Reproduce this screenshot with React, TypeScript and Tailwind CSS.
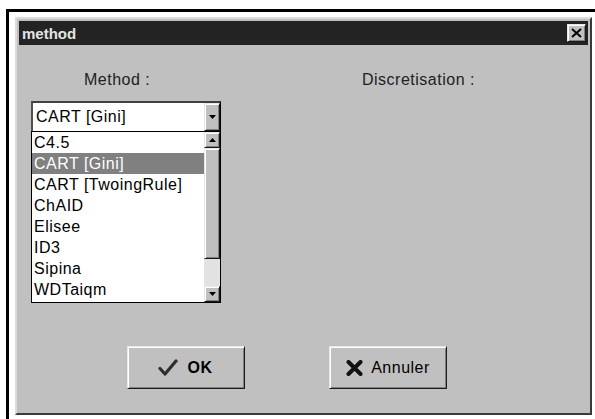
import React from 'react';

const METHODS = ['C4.5', 'CART [Gini]', 'CART [TwoingRule]', 'ChAID', 'Elisee', 'ID3', 'Sipina', 'WDTaiqm'];

// small arrow glyph used by the combo and scrollbar buttons
const Arrow = ({ up = false }: { up?: boolean }) => (
  <svg width="7" height="4" viewBox="0 0 7 4" className="block">
    {up ? <polygon points="0,4 7,4 3.5,0" fill="#000" /> : <polygon points="0,0 7,0 3.5,4" fill="#000" />}
  </svg>
);

const CheckIcon = () => (
  <svg width="20" height="17" viewBox="0 0 20 17" className="block">
    <path d="M2 9.5 L7 15 L18 2" fill="none" stroke="#2e2e2e" strokeWidth="3.2" strokeLinecap="round" strokeLinejoin="round" />
  </svg>
);

const CrossIcon = () => (
  <svg width="17" height="16" viewBox="0 0 17 16" className="block">
    <path d="M2.5 2 L14.5 14 M14.5 2 L2.5 14" fill="none" stroke="#111" strokeWidth="4" strokeLinecap="round" />
  </svg>
);

const raised = 'bg-[#c0c0c0] border border-t-[#e8e8e8] border-l-[#e8e8e8] border-b-[#1a1a1a] border-r-[#1a1a1a] shadow-[inset_1px_1px_0_#ffffff,inset_-1px_-1px_0_#808080]';

const MethodDialog: React.FC = () => {
  const selected = 1;

  return (
    <div className="w-[577px] h-[398px] flex flex-col bg-[#c0c0c0] border-2 border-t-[#dcdcdc] border-l-[#dcdcdc] border-b-[#3a3a3a] border-r-[#3a3a3a] p-[2px]">
      {/* Title bar */}
      <div className="h-[24px] flex items-center justify-between bg-[#232323] pl-[3px] pr-[2px]">
        <span className="text-[15px] font-bold text-[#e4e4e4] leading-none">method</span>
        <button className={`w-[19px] h-[18px] flex items-center justify-center ${raised}`}>
          <svg width="11" height="10" viewBox="0 0 11 10">
            <path d="M1 1 L10 9 M10 1 L1 9" stroke="#000" strokeWidth="2" />
          </svg>
        </button>
      </div>

      {/* Body */}
      <div className="flex-1 flex flex-col text-[16px] text-black tracking-[0.5px]">
        <div className="flex mt-[25px] pl-[12px]">
          <div className="w-[190px] flex flex-col">
            <div className="pl-[53px] leading-[19px] text-[#222]">Method :</div>

            {/* Combo box, dropped down */}
            <div className="mt-[12px] h-[30px] flex bg-white border-t-2 border-l-2 border-r border-t-[#404040] border-l-[#505050] border-r-[#000]">
              <div className="flex-1 flex items-center pl-[3px] leading-none">CART [Gini]</div>
              <div className={`w-[16px] flex items-center justify-center ${raised}`}>
                <Arrow />
              </div>
            </div>

            {/* Drop-down list */}
            <div className="h-[172px] flex bg-white border border-black">
              <div className="flex-1 flex flex-col">
                {METHODS.map((m, i) => (
                  <div
                    key={m}
                    className={`h-[21px] flex items-center pl-[2px] leading-none ${i === selected ? 'bg-[#808080] text-white' : ''}`}
                  >
                    {m}
                  </div>
                ))}
              </div>
              {/* Scrollbar */}
              <div className="w-[16px] flex flex-col bg-[#e2e2e2]">
                <div className={`h-[16px] flex items-center justify-center ${raised}`}>
                  <Arrow up />
                </div>
                <div className={`h-[111px] ${raised}`} />
                <div className="flex-1" />
                <div className={`h-[16px] flex items-center justify-center ${raised}`}>
                  <Arrow />
                </div>
              </div>
            </div>
          </div>
          <div className="ml-[141px] leading-[19px] text-[#222]">Discretisation :</div>
        </div>

        {/* Buttons */}
        <div className="flex mt-[43px] pl-[108px] gap-[84px]">
          <button className={`w-[118px] h-[43px] flex items-center justify-center gap-[10px] pr-[2px] ${raised}`}>
            <CheckIcon />
            <span className="font-bold leading-none">OK</span>
          </button>
          <button className={`w-[118px] h-[43px] flex items-center justify-center gap-[8px] ${raised}`}>
            <CrossIcon />
            <span className="leading-none">Annuler</span>
          </button>
        </div>
      </div>
    </div>
  );
};

export default function App() {
  return (
    <div className="w-[595px] h-[419px] bg-white overflow-hidden font-['Liberation_Sans',Arial,sans-serif]">
      <div className="ml-[6px] mt-[9px] h-[410px] border-t-[3px] border-l-[3px] border-black bg-white pl-[6px] pt-[5px]">
        <MethodDialog />
      </div>
    </div>
  );
}
